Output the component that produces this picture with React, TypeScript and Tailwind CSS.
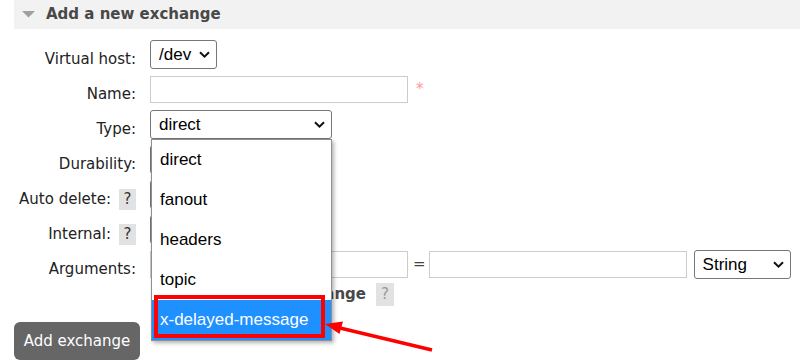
import React from 'react';

const labelFont = { fontFamily: '"DejaVu Sans", Verdana, sans-serif' };
const selectFont = { fontFamily: '"Liberation Sans", Arial, sans-serif' };

const typeOptions = ['direct', 'fanout', 'headers', 'topic', 'x-delayed-message'];

const Chevron: React.FC = () => (
  <svg width="11" height="7" viewBox="0 0 11 7" className="shrink-0">
    <path d="M1 1.2 L5.5 5.6 L10 1.2" fill="none" stroke="#111" strokeWidth="2" />
  </svg>
);

const FakeSelect: React.FC<{ value: string; width: string }> = ({ value, width }) => (
  <div
    className={`${width} h-[29px] border border-[#767676] rounded-[3px] bg-white flex items-center justify-between pl-[8px] pr-[6px] text-[17px] text-black`}
    style={selectFont}
  >
    <span>{value}</span>
    <Chevron />
  </div>
);

const HelpBadge: React.FC<{ light?: boolean }> = ({ light }) => (
  <span
    className={`w-[17px] h-[21px] bg-[#e2e2e2] flex items-center justify-center text-[15px] ${light ? 'text-[#999]' : 'text-[#333]'}`}
  >
    ?
  </span>
);

const Row: React.FC<{ label: string; help?: boolean; children?: React.ReactNode }> = ({ label, help, children }) => (
  <div className="flex h-[35px] items-center">
    <div className="w-[122px] flex justify-end items-center gap-[8px] mt-[9px] text-[15px] text-[#222]">
      <span>{label}</span>
      {help && <HelpBadge />}
    </div>
    <div className="ml-[14px] flex items-center">{children}</div>
  </div>
);

const App: React.FC = () => {
  return (
    <div className="relative w-[800px] h-[363px] overflow-hidden bg-white" style={labelFont}>
      {/* 섹션 헤더 */}
      <div className="ml-[14px] h-[29px] bg-[#f2f2f2] flex items-center">
        <svg width="13" height="7" viewBox="0 0 13 7" className="ml-[8px]">
          <path d="M0 0 L13 0 L6.5 6.5 Z" fill="#a0a0a0" />
        </svg>
        <span className="ml-[11px] text-[15px] font-bold text-[#484848]">Add a new exchange</span>
      </div>

      <div className="pl-[14px] pt-[8px]">
        <Row label="Virtual host:">
          <FakeSelect value="/dev" width="w-[67px]" />
        </Row>
        <Row label="Name:">
          <div className="w-[258px] h-[27px] border border-[#cccccc] bg-white" />
          <span className="ml-[8px] text-[15px] text-[#ff9a9a]">*</span>
        </Row>
        <Row label="Type:">
          <FakeSelect value="direct" width="w-[182px]" />
        </Row>
        {/* 드롭다운 뒤에 가려진 select 들 */}
        <Row label="Durability:">
          <FakeSelect value="" width="w-[100px]" />
        </Row>
        <Row label="Auto delete:" help>
          <FakeSelect value="" width="w-[60px]" />
        </Row>
        <Row label="Internal:" help>
          <FakeSelect value="" width="w-[60px]" />
        </Row>
        <Row label="Arguments:">
          <div className="w-[258px] h-[27px] border border-[#cccccc] bg-white" />
          <span className="ml-[5px] mr-[3px] text-[15px] text-[#444]">=</span>
          <div className="w-[258px] h-[27px] border border-[#cccccc] bg-white" />
          <div className="ml-[7px]">
            <FakeSelect value="String" width="w-[97px]" />
          </div>
        </Row>
        <div className="flex h-[25px] items-center">
          <div className="ml-[186px] flex items-center gap-[10px] text-[15px] text-[#484848]">
            <span className="font-bold">Alternate exchange</span>
            <span className="w-[18px] h-[23px] bg-[#e2e2e2] flex items-center justify-center text-[#999]">?</span>
          </div>
        </div>
        <button className="mt-[15px] w-[126px] h-[38px] rounded-[6px] bg-[#666666] text-white text-[15px]">
          Add exchange
        </button>
      </div>

      {/* 열린 드롭다운 */}
      <div className="absolute left-[151px] top-[139px] w-[181px] h-[202px] bg-white border border-[#8f8f8f] shadow-[2px_2px_4px_rgba(0,0,0,0.3)]" style={selectFont}>
        {typeOptions.map((opt, idx) => (
          <div
            key={opt}
            className={`h-[40px] flex items-center pl-[8px] text-[17px] ${idx === typeOptions.length - 1 ? 'bg-[#1e90ff] text-white' : 'text-black'}`}
          >
            {opt}
          </div>
        ))}
      </div>

      {/* 강조 표시 */}
      <div className="absolute left-[154px] top-[295px] w-[171px] h-[43px] border-[4px] border-[#ff0000]" />
      <svg className="absolute left-0 top-0 pointer-events-none" width="800" height="363">
        <line x1="432" y1="350" x2="340" y2="328" stroke="#ff0000" strokeWidth="3.5" />
        <polygon points="325,324 343,321.5 339.5,334" fill="#ff0000" />
      </svg>
    </div>
  );
};

export default App;
